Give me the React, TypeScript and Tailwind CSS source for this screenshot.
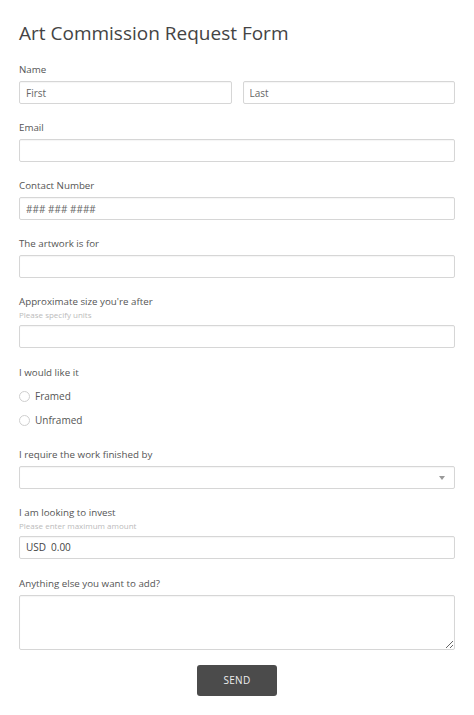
import { useState } from 'react';

const inputCls =
  'block w-full h-[23px] border border-[#d6d6d6] rounded-[2px] bg-white px-[6px] text-[10px] text-[#444] shadow-[inset_0_1px_1px_rgba(0,0,0,0.04)] outline-none placeholder:text-[#666]';

function Label({ text, sub }: { text: string; sub?: string }) {
  return (
    <div className="mb-[4px]">
      <div className="text-[9.75px] leading-[14px] text-[#555]">{text}</div>
      {sub && <div className="text-[8px] leading-[12px] text-[#bbb] mb-[1px]">{sub}</div>}
    </div>
  );
}

function Radio({ label, checked, onClick }: { label: string; checked: boolean; onClick: () => void }) {
  return (
    <label className="flex items-center h-[14px] cursor-pointer" onClick={onClick}>
      <span className="w-[11px] h-[11px] rounded-full border border-[#cfcfcf] bg-white flex items-center justify-center">
        {checked && <span className="w-[5px] h-[5px] rounded-full bg-[#555]" />}
      </span>
      <span className="ml-[5px] text-[10px] text-[#555]">{label}</span>
    </label>
  );
}

export default function App() {
  const [framing, setFraming] = useState('');
  const [notes, setNotes] = useState('');

  return (
    <div className="min-h-screen bg-white px-[19px] pt-[19px] pb-8 font-['Open_Sans',sans-serif]">
      <h1 className="text-[19px] leading-[28px] text-[#444]">Art Commission Request Form</h1>

      <div className="mt-[16px]">
        <Label text="Name" />
        <div className="flex gap-[11px]">
          <input className={inputCls} placeholder="First" />
          <input className={inputCls} placeholder="Last" />
        </div>
      </div>

      <div className="mt-[17px]">
        <Label text="Email" />
        <input className={inputCls} />
      </div>

      <div className="mt-[17px]">
        <Label text="Contact Number" />
        <input className={inputCls} placeholder="### ### ####" />
      </div>

      <div className="mt-[17px]">
        <Label text="The artwork is for" />
        <input className={inputCls} />
      </div>

      <div className="mt-[17px]">
        <Label text="Approximate size you're after" sub="Please specify units" />
        <input className={inputCls} />
      </div>

      <div className="mt-[18px]">
        <div className="text-[9.75px] leading-[14px] text-[#555]">I would like it</div>
        <div className="mt-[9px] flex flex-col gap-[10px]">
          <Radio label="Framed" checked={framing === 'framed'} onClick={() => setFraming('framed')} />
          <Radio label="Unframed" checked={framing === 'unframed'} onClick={() => setFraming('unframed')} />
        </div>
      </div>

      <div className="mt-[21px]">
        <Label text="I require the work finished by" />
        <div className="relative">
          <select className={inputCls + ' appearance-none'}>
            <option></option>
          </select>
          <span className="pointer-events-none absolute right-[10px] top-[10px] w-0 h-0 border-l-[3px] border-r-[3px] border-t-[4px] border-l-transparent border-r-transparent border-t-[#999]" />
        </div>
      </div>

      <div className="mt-[17px]">
        <Label text="I am looking to invest" sub="Please enter maximum amount" />
        <div className="flex items-center h-[23px] border border-[#d6d6d6] rounded-[2px] bg-white px-[6px] text-[10px] text-[#444] shadow-[inset_0_1px_1px_rgba(0,0,0,0.04)]">
          <span>USD</span>
          <input className="ml-[5px] flex-1 outline-none bg-transparent" defaultValue="0.00" />
        </div>
      </div>

      <div className="mt-[18px]">
        <Label text="Anything else you want to add?" />
        <textarea
          className="block w-full h-[55px] border border-[#d6d6d6] rounded-[2px] bg-white px-[6px] py-[4px] text-[10px] text-[#444] outline-none shadow-[inset_0_1px_1px_rgba(0,0,0,0.04)]"
          value={notes}
          onChange={e => setNotes(e.target.value)}
        />
      </div>

      <div className="mt-[15px] flex justify-center">
        <button className="w-[80px] h-[31px] rounded-[3px] bg-[#4b4b4b] text-[10px] text-[#eee] tracking-[0.3px]">
          SEND
        </button>
      </div>
    </div>
  );
}
